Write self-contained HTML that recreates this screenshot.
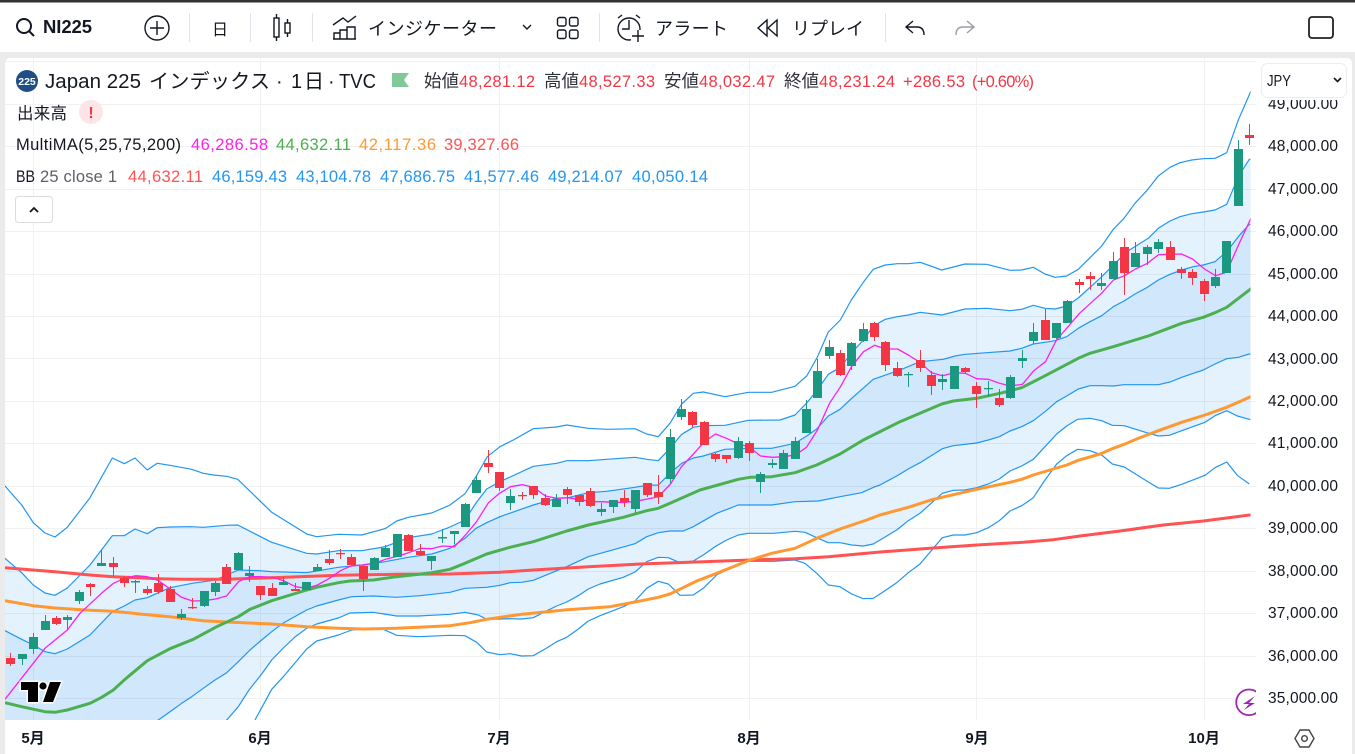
<!DOCTYPE html>
<html lang="ja"><head><meta charset="utf-8"><title>NI225</title>
<style>
html,body{margin:0;padding:0;background:#ebebeb;width:1355px;height:754px;overflow:hidden}
svg{display:block}
text{font-family:"Liberation Sans","Noto Sans CJK JP",sans-serif;fill:#131722}
.v{font-size:16.5px}.l{font-size:17.5px;fill:#2e3138}.r{fill:#F23645}.g{fill:#5d606b}.b{fill:#2196F3}
.ax{font-size:15.5px;fill:#131722}
.x{font-size:15px;font-weight:700;text-anchor:middle}
.t{font-size:18px}
.i{fill:none;stroke:#131722;stroke-width:1.4}
</style></head><body>
<svg width="1355" height="754" viewBox="0 0 1355 754" xmlns="http://www.w3.org/2000/svg">
<defs>
<clipPath id="c1"><rect x="5" y="58" width="1251" height="662"/></clipPath>
<clipPath id="c2"><rect x="5" y="58" width="1245.5" height="662"/></clipPath>
<clipPath id="c3"><rect x="1200" y="680" width="56" height="40"/></clipPath>
</defs>
<rect width="1355" height="754" fill="#ebebeb"/>
<rect y="0" width="1355" height="2.5" fill="#333"/>
<rect y="2.5" width="1355" height="49.5" fill="#fff"/>
<path d="M5 754V63a5 5 0 0 1 5-5H1347a5 5 0 0 1 5 5V754Z" fill="#fff"/>

<!-- toolbar -->
<circle class="i" cx="24" cy="26" r="7" style="stroke-width:2"/><path class="i" style="stroke-width:2" d="M29 31l5 5"/>
<text x="43" y="33" textLength="49" style="font-size:18.5px;font-weight:700">NI225</text>
<circle class="i" cx="157" cy="28" r="12"/><path class="i" d="M157 21v14M150 28h14"/>
<path d="M189.5 13v29M250.5 13v29M312.5 13v29M599.5 13v29M885.5 13v29" stroke="#e0e3eb" stroke-width="1" fill="none"/>
<text x="212" y="35" style="font-size:16px">日</text>
<path class="i" d="M276.5 14v4M276.5 37v4M287.5 19v4M287.5 33v4"/><rect class="i" x="274" y="18" width="5" height="19"/><rect class="i" x="285" y="23" width="5" height="10"/>
<path class="i" d="M333 25l10-7 5 4 8-6M334 33v6h6v-6zM340 39v-9h7v9M347 39v-12h8v12zM333 39h23"/>
<text class="t" x="368" y="35" textLength="129">インジケーター</text>
<path class="i" d="M523 25l4 4 4-4"/>
<rect class="i" x="557.5" y="17.5" width="8.5" height="8.5" rx="2"/><rect class="i" x="569.5" y="17.5" width="8.5" height="8.5" rx="2"/><rect class="i" x="557.5" y="30" width="8.5" height="8.5" rx="2"/><rect class="i" x="569.5" y="30" width="8.5" height="8.5" rx="2"/>
<circle class="i" cx="629" cy="29" r="11"/><path class="i" d="M629 20v9h-7M618 18l4-3M640 18l-4-3"/><rect x="631" y="30" width="14" height="13" fill="#fff"/><path class="i" d="M638 30v12M632 36h12"/>
<text class="t" x="655" y="35" textLength="73">アラート</text>
<path class="i" d="M767 20l-9 8 9 8zM777 20l-9 8 9 8z"/>
<text class="t" x="792" y="35" textLength="72">リプレイ</text>
<path class="i" d="M913 21l-7 6 7 6M906 27h11q7 0 7 8"/>
<path class="i" style="stroke:#9a9ea8" d="M967 21l7 6-7 6M974 27h-11q-7 0-7 8"/>
<rect x="1309" y="17" width="24" height="21" rx="3" fill="none" stroke="#222" stroke-width="1.8"/>

<!-- chart -->
<g clip-path="url(#c2)" stroke="#2196F3" stroke-width="1.2" stroke-linejoin="round">
<polyline fill="none" points="5,486 21.7,505 33.3,522.7 45,533 55,537 67.3,527.3 90,497.7 112.3,458 124.3,463.7 135,458 147.3,470 157.3,463.3 170,465.3 191.7,469.3 203.3,473.3 213.3,475 226.7,476.3 237.7,479.3 271.7,512.3 306.7,534 316.7,536.7 338.3,534.3 361.7,535 385,528.7 396.7,521 408.3,517.3 431.7,513 450,505 465,493.7 476,476.7 487.3,456.7 500,446.7 513.3,440 533.3,428.7 556.7,427 566.7,425 588.3,428.3 606.7,429.3 635,428.7 646.7,434 658.3,436.7 670,423.3 681.7,404 693.3,393.3 703.3,392 725,396.7 748.3,392.3 771.7,392.3 795,386.3 806.7,376 817.3,357.3 828.3,332 840.3,320 851.3,300 863.3,282.3 873.3,269.3 885.3,265 897.3,263.7 908.3,263.7 920.3,262.3 941.7,270 965,264 986.7,264.3 1010,270.3 1021.7,270 1033.3,267.3 1045,274 1055,277.3 1066.7,276 1078.3,269.3 1090,257.7 1101.7,246 1113.3,229.3 1124,218.3 1135,203.3 1146.7,190.7 1158.3,176 1170,167.3 1180,162.7 1191.7,160 1203.3,158.7 1215,158.3 1226.7,152.7 1238.3,120 1249.3,94.7 1260,70"/>
<polyline fill="#E3F2FD" points="0,554 5,558.3 21.7,572.7 33.3,585 45,593 55,595.3 67.3,588 90,565 112.3,535.7 124.3,535.7 135,529 147.3,533.7 157.3,527.7 170,527 191.7,526.7 203.3,527.3 226.7,525.3 237.7,525 271.7,542.3 306.7,553.3 316.7,554 338.3,550.7 361.7,550.7 385,546.7 396.7,542.3 408.3,537.7 431.7,534 450,527 465,520 476,503 486.7,489 500,481.7 533.3,466.3 556.7,463.3 566.7,460.7 588.3,460.7 606.7,459.3 635,457.3 646.7,459.3 658.3,460.7 670,448.3 681.7,434.3 693.3,427.3 703.3,425.7 725,425.3 748.3,420.3 780,420 795,415 806.7,403 817.3,390 828.3,374.3 840.3,367.3 851.3,353.3 863.3,340 873.3,326 885.3,319.3 897.3,316.7 908.3,315 920.3,312.3 941.7,315 965,309 986.7,308.3 1010,310.7 1021.7,309.3 1033.3,305.3 1045,308.3 1055,309 1066.7,306 1078.3,298 1101.7,276.7 1126.7,251.7 1148.3,238.3 1158.3,228.3 1170,221 1180,216.7 1191.7,213.7 1203.3,212 1215,210 1226.7,204.3 1238.3,176.7 1249.3,159.3 1300,159 1300,754 0,754"/>
<polyline fill="#D1E7FC" points="0,628 5,630.7 21.7,639.3 33.3,645 45,651.7 55,653.7 67.3,649 90,635 112.3,611.7 124.3,606 135,600 147.3,597.7 158.3,592.7 170,587.7 192.3,583.3 215.3,580 238.3,570 260,570.7 271.7,571.7 306.7,572.7 338.3,567.3 361.7,565 385,561.7 408.3,557.3 431.7,554 450,548.3 465,538.3 476,528.3 486.7,522.7 500,516.7 533.3,505 556.7,498.3 568.3,497.7 588.3,492.7 606.7,491.3 635,487.3 646.7,485.3 658.3,485 670,473.3 681.7,463.3 693.3,458 703.3,456 725,449.3 748.3,448.3 771.7,448.3 795,443.3 806.7,436 816.7,429 828.3,416 840,409.3 851.7,398.3 873.3,379.3 900,370 920,361.7 943.3,359.3 955,356 965,354.3 986.7,352.7 1010,351 1021.7,348.3 1033.3,344 1045,342.3 1055,340.7 1066.7,336.7 1078.3,328.3 1090,321.7 1101.7,315.7 1113.3,306.7 1124,301 1135,294 1146.7,287.7 1158.3,280 1170,274.3 1181.7,270 1193.3,266.7 1203.3,265 1215,261.7 1226.7,251.7 1238.3,236.7 1249.3,224.3 1300,224 1300,754 0,754"/>
<polyline fill="#E3F2FD" points="0,754 100,750 158.3,720 170,711.7 181.7,703.3 191.7,696.7 203.3,688.3 215,680 226.7,672.7 238.3,661.7 250,650 261.7,640 271.7,631.7 283.3,623 306.7,610 316.7,606 338.3,600 351.7,596.7 373.3,596 396.7,597.3 420,595.7 450,592.3 465,588.3 486.7,587.3 500,585.3 510,582.7 521.7,582.3 533.3,580.3 556.7,570.7 566.7,566.7 588.3,556.7 610,550.7 635,543.7 646.7,536.7 658.3,532.7 670,531 683.3,531 693.3,526.7 716.7,513.3 738.3,505 748.3,505 771.7,505 795,501.7 818.3,501 840,496.7 861.7,492.7 875,486.7 880,485 896.7,476 908.3,469 920,462.7 942.3,448.7 953.3,445.7 976.7,443 988.3,440 999.3,436.7 1010,431 1021.7,426.7 1033.3,420.7 1045,411.7 1056.7,401.7 1066.7,396 1078.3,389 1090,385.7 1101.7,385.7 1113.3,386 1124,384.7 1158.3,384.7 1170,382 1181.7,377.3 1193.3,373.3 1203.3,370 1215,364 1226.7,358.7 1238.3,357.3 1249.3,354 1300,354 1300,754"/>
<polyline fill="#fff" points="0,754 205,750 226.7,720 238.3,706.7 249,690 261.7,674 271.7,660 283.3,648 295,637 306.7,628.3 316.7,624 338.3,618 350,613 373.3,612.3 396.7,616 418.3,616 450,614.3 465,612.3 478.3,615 486.7,619.3 500,619 510,618.7 521.7,619 533.3,617.7 545,611.7 556.7,606 566.7,602 578.3,595.7 588.3,589 600,584 623.3,577.3 635,572 646.7,561.7 658.3,557.3 668.3,557.7 680,562.7 693.3,561 703.3,555 715,546.7 726.7,540 738.3,535 748.3,533.3 773.3,533.3 795,531.3 805,532.3 816.7,537.7 828.3,542.7 840,542.7 851.7,545 863.3,546 873.3,544 880,540 896.7,530 908.3,520.7 920,513.3 942.3,493.3 953.3,490.3 965,490 976.7,487.7 988.3,484 999.3,479 1010,471 1021.7,466 1033.3,459.3 1045,446.7 1056.7,434 1066.7,426 1077.7,419.3 1090,418.3 1101.7,420.7 1112.3,425.3 1124.3,425.7 1146.7,432.7 1158.3,436 1169.3,435.3 1181.7,430.7 1205,422.3 1215,415.7 1226.7,410.7 1237.3,416 1249.3,419.3 1300,420 1300,754"/>
<polyline fill="none" points="255,720 271.7,689.3 283.3,676.7 306.7,649 316.7,641 338.3,635 351.7,630 371.7,628 383.3,629.3 396.7,635.3 418.3,636.7 450,635.3 465,635.7 476.7,642.3 486.7,652 500,654.7 510,653.7 521.7,656 533.3,655.7 545,649 556.7,641.7 566.7,637.3 578.3,629 588.3,621 600,615.7 623.3,606.7 635,601 646.7,588.3 658.3,581.3 668.3,584 680,595.3 693.3,595 703.3,588.3 716.7,575 726.7,570 738.3,564 748.3,561.3 773.3,561.3 795,560 805,563.3 816.7,573.3 828.3,585 840,586.7 851.7,594 863.3,598.7 873.3,598.3 880,594 896.7,582.7 908.3,572.7 920,564 942.3,537.7 953.3,535 965,535 976.7,532.7 988.3,527.7 999.3,520.7 1010,511 1021.7,505.7 1033.3,497.7 1045,480 1056.7,464 1066.7,455.7 1077.7,449.3 1090,450.7 1101.7,455 1112.3,464 1124.3,467 1146.7,481 1158.3,488 1169.3,488.3 1181.7,484.3 1205,475.3 1215,467.7 1226.7,462 1237.3,475.3 1249.3,484"/>
</g>
<g clip-path="url(#c1)">
<path fill="none" stroke="#000" stroke-opacity=".055" stroke-width="1" d="M5 61.5H1256M5 104.5H1256M5 146.5H1256M5 189.5H1256M5 231.5H1256M5 274.5H1256M5 316.5H1256M5 358.5H1256M5 401.5H1256M5 443.5H1256M5 486.5H1256M5 528.5H1256M5 571.5H1256M5 613.5H1256M5 656.5H1256M5 698.5H1256M33.5 58V720M260.5 58V720M499.5 58V720M749.5 58V720M976.5 58V720M1204.5 58V720"/>
</g>
<g clip-path="url(#c2)" fill="none" stroke-linejoin="round">
<polyline stroke="#FF5252" stroke-width="3" points="5,567.7 55,571.7 90,575 113.3,576.7 158.3,578.7 181.7,579.3 226.7,579.3 271.7,577.7 338.3,575.3 396.7,574.3 450,574 500,572.3 533.3,570 588.3,566.7 646.7,563.7 703.3,561.7 750,560 795,558.7 828.3,556.7 880,552 933.3,548 976.7,545 1023.3,542.3 1053.3,539.7 1080,536 1120,531 1163.3,525 1203.3,521 1226.7,518 1252,514.7"/>
<polyline stroke="#FF9830" stroke-width="3" points="5,600.7 33.3,605.7 55,608 90,610.3 113.3,611.3 147.3,614.7 170,616.7 203.3,620.7 226.7,622 271.7,624 306.7,626.7 338.3,628.3 363.3,629 396.7,628.3 450,625.7 470,622.7 486.7,619.3 500,617.3 521.7,614.3 545,612 566.7,609.7 610,606.7 635,602 658.3,597.3 670,594 681.7,588.3 696.7,581 716.7,573.3 750,560 771.7,553.3 795,548.3 816.7,538.3 840,529 866.7,520 880,515 908.3,507.3 933.3,499.3 976.7,489.3 1010,482.3 1021.7,479.3 1033.3,475 1053.3,469 1066.7,465 1078.3,460.3 1100,454 1113.3,448.3 1125,444 1136.7,439 1158.3,430.7 1181.7,422.3 1205,415 1226.7,407.3 1241.7,400.7 1252,396"/>
<polyline stroke="#4CAF50" stroke-width="3" points="5,702.7 21.7,706.7 45,711.7 55,712.3 67.3,710 90,703.3 101.7,697.3 113.3,690 125,679.3 147.3,660.7 170,648.7 193.3,639.3 216.7,626.7 238.3,616.7 250,609.3 271.7,600.7 306.7,590 316.7,587.3 338.3,582.7 350,581 373.3,580 396.7,576.7 431.7,572.7 450,569.3 465,563.3 486.7,554 510,547.3 533.3,541.7 566.7,531 588.3,525 623.3,517.3 646.7,510.7 658.3,508.3 670,503.3 700,490 738.3,479.3 750,477.3 771.7,476.7 795,472.7 816.7,465 840,454 863.3,440 900,421.7 920,413.3 941.7,404 953.3,401 976.7,398.3 1000,393.3 1021.7,387.7 1043.3,376.7 1078.3,358.3 1090,353.3 1113.3,346.7 1135,340 1148.3,336 1181.7,323.3 1203.3,317.3 1215,312.7 1226.7,307.3 1252,288"/>
<polyline stroke="#FF1FEA" stroke-width="1.3" points="5,699.3 45,648.3 67.3,630 80,613.3 101.5,593.3 113.5,583.3 124.5,578.3 135.5,575.7 147.5,576.7 158.5,580.7 170.5,589.3 181.5,597.3 192.5,601 204.5,600.7 215.5,599 226.5,596 238.5,581.7 249.5,576.7 260.5,576.7 272.5,577.3 283.5,580.7 295.5,586.7 306.5,588.3 317.5,585 329.5,578.3 340.5,570.7 351.5,565.7 363.5,565 374.5,563.3 385.5,559.3 397.5,556.3 408.5,552.7 420.5,548.3 431.5,548.7 442.5,546 454.5,546.7 465.5,535 476.5,521.7 488.5,502.7 499.5,493.3 510.5,486.7 522.5,484.7 533.5,487.3 545.5,496 556.5,498.3 567.5,497.7 579.5,499.3 590.5,501.7 601.5,501.7 613.5,502.3 624.5,502.3 635.5,501.3 647.5,499 658.5,496.7 670.5,484 681.5,466.7 692.5,455 704.5,441.7 715.5,434 726.5,438.3 738.5,444 749.5,447.3 760.5,456 772.5,457.3 783.5,456.7 795.5,455 806.5,447.3 817.5,430 829.5,403.3 840.5,386.7 851.5,366.7 863.5,351.7 874.5,345.3 885.5,349 897.5,349 908.3,355 920.5,362.7 931.5,372.7 942.5,375.7 954.5,372.7 965.5,373.3 976.5,378.7 988.5,379.3 999.5,383.3 1010.5,386 1022.5,384.3 1033.5,371 1045.5,361.7 1056.5,340 1067.5,327.3 1079.5,313.3 1090.5,303.3 1101.5,293.3 1113.5,280 1124.5,275.7 1135.5,269 1147.5,263.3 1158.5,254.7 1170.5,254.3 1181.5,254 1192.5,259 1204.5,269 1215.5,275.7 1226.5,272.3 1238.5,245 1252,216"/>
</g>
<g clip-path="url(#c1)" fill="none">
<!-- green wicks -->
<path stroke="#1B987F" stroke-width="1" d="M22.5 654V665M33.5 633V654M45.5 615V630M67.5 615V630M79.5 590V604M101.5 550V566M135.5 580V593M181.5 609V620M204.5 591V607M215.5 581V596M238.5 552V570M249.5 566V582M283.5 577V585M306.5 582V590M317.5 564V571M374.5 557V570M385.5 545V557M397.5 534V557M431.5 556V570M442.5 529V543M454.5 531V544M465.5 503V527M476.5 475V493M510.5 489V510M556.5 494V507M601.5 503V516M613.5 500V513M635.5 490V513M670.5 429V483M681.5 399V420M738.5 437V459M760.5 472V493M772.5 459V468M783.5 450V469M795.5 437V459M806.5 400V433M817.5 359V398M829.5 340V359M851.5 342V370M863.5 323V342M908.5 372V387M942.5 374V390M954.5 366V389M988.5 381V397M1010.5 375V399M1022.5 350V368M1033.5 323V344M1056.5 323V339M1067.5 300V323M1101.5 273V290M1113.5 252V279M1135.5 242V267M1147.5 245V265M1158.5 239V253M1215.5 269V288M1226.5 241V273M1238.5 140V206"/>
<!-- red wicks -->
<path stroke="#F23645" stroke-width="1" d="M10.5 653V666M56.5 616V625M90.5 583V596M113.5 557V576M124.5 576V587M147.5 586V595M158.5 574V594M170.5 586V602M192.5 598V609M226.5 564V584M260.5 586V600M272.5 583V596M295.5 583V591M329.5 550V565M340.5 549V559M351.5 554V565M363.5 565V591M408.5 534V551M420.5 544V556M488.5 450V473M499.5 472V491M522.5 492V500M533.5 486V499M545.5 494V506M567.5 487V504M579.5 495V506M590.5 488V507M624.5 490V507M647.5 483V497M658.5 475V504M692.5 411V427M704.5 421V445M715.5 453V462M726.5 455V463M749.5 441V461M840.5 350V376M874.5 322V341M885.5 341V371M897.5 362V377M920.5 350V372M931.5 371V395M965.5 367V374M976.5 382V408M999.5 389V407M1045.5 309V340M1079.5 279V293M1090.5 272V290M1124.5 238V295M1170.5 241V260M1181.5 267V279M1192.5 269V285M1204.5 279V301M1249.5 124V145"/>
<!-- green bodies -->
<path stroke="#1B987F" stroke-width="9" d="M22.5 654V659M33.5 637V649M45.5 621V630M67.5 617V620M79.5 592V601M101.5 563V566M135.5 581V582.5M181.5 614V618M204.5 591V606M215.5 583V592M238.5 553V570M249.5 573V576M283.5 582V585M306.5 582V590M317.5 567V571M374.5 558V570M385.5 548V557M397.5 534V557M431.5 556V561M442.5 537V538.5M454.5 531V534M465.5 504V527M476.5 480V493M510.5 496V503M556.5 499V507M601.5 509V512M613.5 500V507M635.5 490V509M670.5 437V479M681.5 409V417M738.5 441V458M760.5 474V482M772.5 463V465M783.5 453V469M795.5 441V459M806.5 409V433M817.5 371V398M829.5 347V356M851.5 343V366M863.5 329V341M908.5 374V375.2M942.5 379V382M954.5 366V389M988.5 388V389.2M1010.5 377V398M1022.5 358V361M1033.5 332V341M1056.5 323V338M1067.5 301V323M1101.5 283V286M1113.5 261V279M1135.5 253V267M1147.5 247V254M1158.5 242V249M1215.5 277V286M1226.5 241V273M1238.5 149V206"/>
<!-- red bodies -->
<path stroke="#F23645" stroke-width="9" d="M10.5 658V664M56.5 618V624M90.5 584V587M113.5 563V567M124.5 578V583M147.5 589V593M158.5 583V592M170.5 589V602M192.5 607V608.2M226.5 567V584M260.5 586V595M272.5 588V596M295.5 589V591M329.5 559V563M340.5 553V554.2M351.5 557V565M363.5 566V579M408.5 535V551M420.5 551V555M488.5 463V467M499.5 472V488M522.5 495V496.2M533.5 486V495M545.5 498V505M567.5 489V495M579.5 495V502M590.5 491V506M624.5 498V502M647.5 483V495M658.5 492V497M692.5 412V425M704.5 422V445M715.5 454V459M726.5 455V459M749.5 443V453M840.5 353V375M874.5 323V337M885.5 342V365M897.5 368V376M920.5 360V368M931.5 375V386M965.5 368V372M976.5 386V394M999.5 398V405M1045.5 320V340M1079.5 282V285M1090.5 276V279M1124.5 247V273M1170.5 247V260M1181.5 269V273M1192.5 272V278M1204.5 281V294M1249.5 135V138"/>
</g>
<!-- TV watermark -->
<g fill="#000" stroke="#fff" stroke-width="3" paint-order="stroke" stroke-linejoin="miter">
<path d="M21 682H38V702H28V690H21Z"/><circle cx="43" cy="686" r="3.6"/><path d="M50 682H61L53 702H43Z"/>
</g>
<!-- purple badge -->
<g clip-path="url(#c3)"><circle cx="1249" cy="702.3" r="12.8" fill="#fff" stroke="#9C27B0" stroke-width="1.8"/><path d="M1255 696L1243 704H1249L1244 710 1255 703H1249Z" fill="#9C27B0"/></g>

<!-- legend -->
<circle cx="27" cy="81" r="11" fill="#1F4E85"/><text x="27" y="85" text-anchor="middle" style="font-size:10.5px;font-weight:700;fill:#fff">225</text>
<text x="45" y="88" textLength="96" style="font-size:20.5px">Japan 225</text>
<text x="149" y="88" textLength="121" style="font-size:20px">インデックス</text>
<text x="276" y="88" style="font-size:20px">·</text>
<text x="291" y="88" textLength="33" style="font-size:20px">1日</text>
<text x="328" y="88" style="font-size:20px">·</text>
<text x="339" y="88" textLength="37" lengthAdjust="spacingAndGlyphs" style="font-size:20.5px">TVC</text>
<path d="M392 73H409L404 80 409 87H392Z" fill="#82C99A"/>
<text class="l" x="424" y="87">始値</text><text class="v r" x="459" y="87" textLength="76">48,281.12</text>
<text class="l" x="544" y="87">高値</text><text class="v r" x="579" y="87" textLength="76">48,527.33</text>
<text class="l" x="664" y="87">安値</text><text class="v r" x="699" y="87" textLength="76">48,032.47</text>
<text class="l" x="784" y="87">終値</text><text class="v r" x="819" y="87" textLength="76">48,231.24</text>
<text class="v r" x="903" y="87" textLength="62">+286.53</text><text class="v r" x="972" y="87" textLength="62">(+0.60%)</text>
<text x="17" y="119" textLength="50" style="font-size:16.5px">出来高</text>
<rect x="79" y="100" width="24" height="24" rx="12" fill="#FDE4E7"/><text x="91" y="118" text-anchor="middle" style="font-size:16px;font-weight:700;fill:#F23645">!</text>
<text class="v" x="16" y="150" textLength="165">MultiMA(5,25,75,200)</text>
<text class="v" x="191" y="150" textLength="77" style="fill:#FF1FEA">46,286.58</text>
<text class="v" x="276" y="150" textLength="75" style="fill:#4CAF50">44,632.11</text>
<text class="v" x="359" y="150" textLength="77" style="fill:#FF9830">42,117.36</text>
<text class="v" x="444" y="150" textLength="75" style="fill:#FF5252">39,327.66</text>
<text class="v" x="16" y="182" textLength="19" lengthAdjust="spacingAndGlyphs">BB</text>
<text class="v g" x="40" y="182" textLength="77">25 close 1</text>
<text class="v" x="128" y="182" textLength="75" style="fill:#FF5252">44,632.11</text>
<text class="v b" x="212" y="182" textLength="75">46,159.43</text>
<text class="v b" x="296" y="182" textLength="75">43,104.78</text>
<text class="v b" x="380" y="182" textLength="75">47,686.75</text>
<text class="v b" x="464" y="182" textLength="75">41,577.46</text>
<text class="v b" x="548" y="182" textLength="75">49,214.07</text>
<text class="v b" x="632" y="182" textLength="76">40,050.14</text>
<rect x="15.5" y="196.5" width="37" height="26" rx="3" fill="#fff" stroke="#dcdcdc"/>
<path d="M30 212l4-4 4 4" fill="none" stroke="#131722" stroke-width="1.8"/>

<!-- price axis -->
<text class="ax" x="1268" y="109" textLength="70">49,000.00</text>
<text class="ax" x="1268" y="151" textLength="70">48,000.00</text>
<text class="ax" x="1268" y="194" textLength="70">47,000.00</text>
<text class="ax" x="1268" y="236" textLength="70">46,000.00</text>
<text class="ax" x="1268" y="279" textLength="70">45,000.00</text>
<text class="ax" x="1268" y="321" textLength="70">44,000.00</text>
<text class="ax" x="1268" y="364" textLength="70">43,000.00</text>
<text class="ax" x="1268" y="406" textLength="70">42,000.00</text>
<text class="ax" x="1268" y="448" textLength="70">41,000.00</text>
<text class="ax" x="1268" y="491" textLength="70">40,000.00</text>
<text class="ax" x="1268" y="533" textLength="70">39,000.00</text>
<text class="ax" x="1268" y="576" textLength="70">38,000.00</text>
<text class="ax" x="1268" y="618" textLength="70">37,000.00</text>
<text class="ax" x="1268" y="661" textLength="70">36,000.00</text>
<text class="ax" x="1268" y="703" textLength="70">35,000.00</text>
<rect x="1258" y="96" width="92" height="4" fill="#fff"/>
<rect x="1261.5" y="63.5" width="85" height="34" rx="6" fill="#fff" stroke="#ededed"/>
<text x="1267" y="86" textLength="24" lengthAdjust="spacingAndGlyphs" style="font-size:16px">JPY</text>
<path d="M1334 78l3.5 3.5 3.5-3.5" fill="none" stroke="#131722" stroke-width="1.6"/>

<!-- time axis -->
<text class="x" x="33" y="743">5月</text>
<text class="x" x="260" y="743">6月</text>
<text class="x" x="499" y="743">7月</text>
<text class="x" x="749" y="743">8月</text>
<text class="x" x="977" y="743">9月</text>
<text class="x" x="1204" y="743">10月</text>
<path d="M1295 738.5l5-8.5h9l5 8.5-5 8.5h-9z" fill="none" stroke="#444" stroke-width="1.4"/><circle cx="1304.5" cy="738.5" r="2.8" fill="none" stroke="#444" stroke-width="1.4"/>
</svg>
</body></html>
